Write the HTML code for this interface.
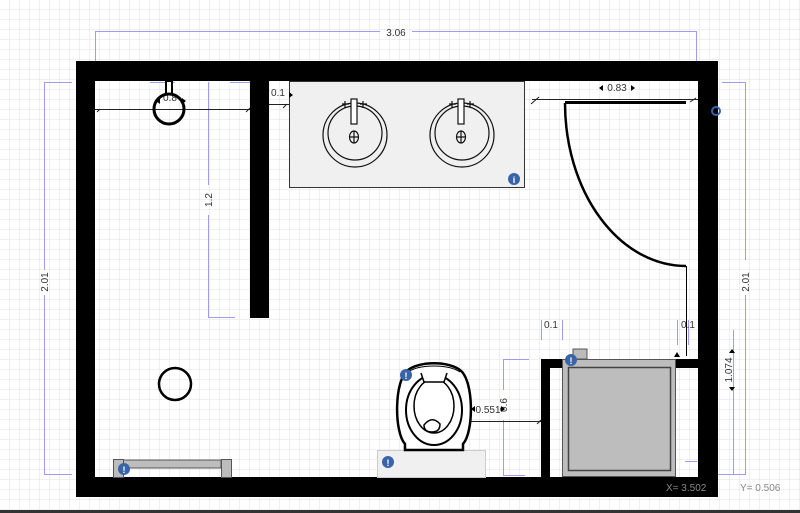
<!DOCTYPE html>
<html><head><style>
html,body{margin:0;padding:0;width:800px;height:513px;overflow:hidden;background:#fff}
svg text{font-family:"Liberation Sans",sans-serif}
</style></head><body>
<svg width="800" height="513" viewBox="0 0 800 513" xmlns="http://www.w3.org/2000/svg">
<defs>
<pattern id="g" width="10" height="10" patternUnits="userSpaceOnUse"><path d="M10 0V10M0 10H10" stroke="#e2e2e2" stroke-width="1" fill="none"/></pattern>
</defs>
<rect width="800" height="513" fill="url(#g)"/>
<g stroke="#9c9cf0" fill="none" stroke-width="1">
<path d="M95.5 61V31.5H380M412 31.5H696.5V61"/>
<path d="M72 82.5H44.5V270M44.5 295V474.5H72"/>
<path d="M150 82.5H175M230 82.5H250"/>
<path d="M208.5 82V185M208.5 215V317.5H235"/>
<path d="M722 82.5H745.5V260M745.5 295V474.5H722"/>
<path d="M685 461.5H697M703 474.5H733.5V330"/>
<path d="M503 359.5H529M503.5 359V390M503.5 420V475.5H525"/>
<path d="M541.5 320V340M562.5 320V340M677.5 320V345M688.5 320V345"/>
</g>
<path d="M76 61H718V497H76Z M95 81V477H698V81Z" fill="#000" fill-rule="evenodd"/>
<rect x="250" y="81" width="19" height="237" fill="#000"/>
<rect x="289.5" y="81.5" width="235" height="106" fill="#f0f0f0" stroke="#333"/>
<g fill="none" stroke="#111" stroke-width="1.2">
<circle cx="355" cy="135" r="32"/><circle cx="355" cy="133" r="27"/>
<ellipse cx="354" cy="137" rx="4.5" ry="6"/><path d="M349.5 137H358.5M354 131V143"/>
<rect x="351" y="99" width="6" height="25" fill="#fff"/>
<path d="M342 104H349M345 101V108M360 104H367M363 101V108"/>
<circle cx="462" cy="135" r="32"/><circle cx="462" cy="133" r="27"/>
<ellipse cx="461" cy="137" rx="4.5" ry="6"/><path d="M456.5 137H465.5M461 131V143"/>
<rect x="458" y="99" width="6" height="25" fill="#fff"/>
<path d="M449 104H456M452 101V108M467 104H474M470 101V108"/>
</g>
<circle cx="514" cy="179" r="6" fill="#3a64a8"/><text x="514" y="183" font-size="9" fill="#fff" text-anchor="middle" font-weight="bold">i</text>
<g stroke="#222" stroke-width="1" fill="none">
<path d="M95 109.5H250M97 112L100 109M246 112L250 108"/>
<path d="M269 104.5H289M283 108L287 104"/>
<path d="M532 99.5H698M531 104L539 97M690 102L696 98"/>
<path d="M468 421.5H541M537 424L541 420"/>
</g>
<text x="170" y="101" font-size="10" fill="#333" text-anchor="middle">0.8</text>
<path d="M160 98l-4 3 4 3zM182 98l4 3-4 3z" fill="#000"/>
<text x="278" y="96" font-size="10" fill="#333" text-anchor="middle">0.1</text><path d="M289 92l4 3-4 3z" fill="#000"/>
<text x="617" y="91" font-size="10" fill="#333" text-anchor="middle">0.83</text>
<path d="M603 85l-4 3 4 3zM631 85l4 3-4 3z" fill="#000"/>
<text x="396" y="36" font-size="10" fill="#333" text-anchor="middle">3.06</text>
<text transform="translate(48,282) rotate(-90)" font-size="10" fill="#333" text-anchor="middle">2.01</text>
<text transform="translate(212,200) rotate(-90)" font-size="10" fill="#333" text-anchor="middle">1.2</text>
<text transform="translate(749,282) rotate(-90)" font-size="10" fill="#333" text-anchor="middle">2.01</text>
<text transform="translate(732,370) rotate(-90)" font-size="10" fill="#333" text-anchor="middle">1.074</text>
<path d="M729 353l3 -4 3 4zM729 387l3 4 3-4z" fill="#000"/>
<text transform="translate(507,405) rotate(-90)" font-size="10" fill="#333" text-anchor="middle">0.6</text>
<text x="488" y="413" font-size="10" fill="#333" text-anchor="middle">0.551</text>
<path d="M475 406l-4 3 4 3zM501 406l4 3-4 3z" fill="#000"/>
<text x="551" y="328" font-size="10" fill="#333" text-anchor="middle">0.1</text>
<text x="688" y="328" font-size="10" fill="#333" text-anchor="middle">0.1</text>
<rect x="166" y="81" width="6" height="13" fill="#fff" stroke="#000" stroke-width="2"/>
<circle cx="169" cy="109" r="15" fill="none" stroke="#000" stroke-width="3"/>
<circle cx="175" cy="384" r="16" fill="none" stroke="#000" stroke-width="2.5"/>
<path d="M565 102.5H686" stroke="#000" stroke-width="3"/>
<path d="M565 103A121 163 0 0 0 686 266" fill="none" stroke="#000" stroke-width="2.5"/>
<path d="M686.5 266V356" stroke="#000"/>
<rect x="541" y="359" width="27" height="9" fill="#000"/>
<rect x="541" y="359" width="9" height="118" fill="#000"/>
<rect x="675" y="359" width="23" height="9" fill="#000"/>
<rect x="573" y="349" width="14" height="10" fill="#bbb" stroke="#555"/>
<rect x="562.5" y="359.5" width="113" height="117" fill="#bdbdbd" stroke="#555"/>
<rect x="568.5" y="367.5" width="102" height="103" fill="none" stroke="#444" stroke-width="1.5"/>
<path d="M674 357l3-5 3 5z" fill="#000"/>
<circle cx="571" cy="360" r="6" fill="#3a64a8"/><text x="571" y="364" font-size="9" fill="#fff" text-anchor="middle" font-weight="bold">!</text>
<circle cx="716" cy="111" r="4" fill="none" stroke="#3a64a8" stroke-width="2"/>
<!-- toilet -->
<rect x="377.5" y="450.5" width="108" height="27" fill="#f0f0f0" stroke="#ccc"/>
<circle cx="388" cy="462" r="6" fill="#3a64a8"/><text x="388" y="466" font-size="9" fill="#fff" text-anchor="middle" font-weight="bold">!</text>
<path d="M405 450V444C394 432 394 380 408 370C420 361 448 361 460 370C474 380 474 432 463 444V450Z" fill="#fff" stroke="#000" stroke-width="2.5"/>
<path d="M408 372C420 364 448 364 460 372" fill="none" stroke="#000" stroke-width="1"/>
<ellipse cx="434" cy="410" rx="28" ry="35" fill="none" stroke="#000" stroke-width="2"/>
<ellipse cx="434" cy="406" rx="20" ry="27" fill="none" stroke="#000" stroke-width="1.5"/>
<path d="M421 373L424 382H444L447 373" fill="#fff" stroke="#000" stroke-width="1.5"/>
<path d="M424 425Q432 415 440 424Q440 432 432 432Q424 432 424 425Z" fill="#fff" stroke="#000" stroke-width="1.5"/>
<circle cx="406" cy="375" r="6" fill="#3a64a8"/><text x="406" y="379" font-size="9" fill="#fff" text-anchor="middle" font-weight="bold">!</text>
<!-- bench -->
<rect x="123" y="460" width="98" height="8" fill="#bdbdbd" stroke="#555"/>
<rect x="113.5" y="459.5" width="10" height="18" fill="#bdbdbd" stroke="#555"/>
<rect x="221.5" y="459.5" width="10" height="18" fill="#bdbdbd" stroke="#555"/>
<circle cx="124" cy="469" r="6" fill="#3a64a8"/><text x="124" y="473" font-size="9" fill="#fff" text-anchor="middle" font-weight="bold">!</text>
<text x="666" y="491" font-size="10" fill="#888" font-family="Liberation Mono">X= 3.502</text>
<text x="740" y="491" font-size="10" fill="#888" font-family="Liberation Mono">Y= 0.506</text>
<rect x="0" y="510" width="800" height="3" fill="#333"/>
</svg>
</body></html>
